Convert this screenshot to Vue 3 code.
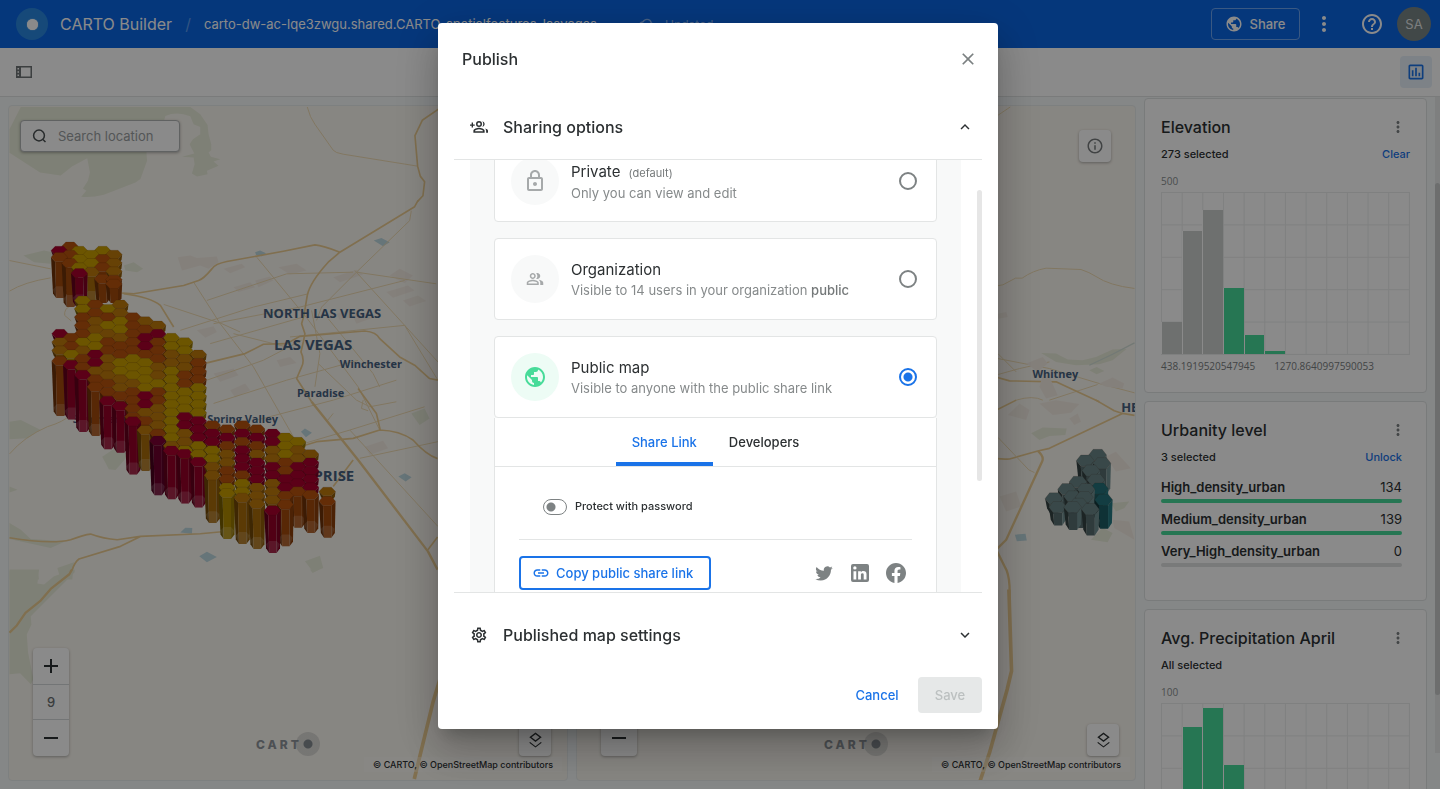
<script setup>
import { ref, computed, onMounted } from 'vue'

const icons = {
  globe: 'M12 2C6.48 2 2 6.48 2 12s4.48 10 10 10 10-4.48 10-10S17.52 2 12 2zm-1 17.93c-3.95-.49-7-3.85-7-7.93 0-.62.08-1.21.21-1.79L9 15v1c0 1.1.9 2 2 2v1.93zm6.9-2.54c-.26-.81-1-1.39-1.9-1.39h-1v-3c0-.55-.45-1-1-1H8v-2h2c.55 0 1-.45 1-1V7h2c1.1 0 2-.9 2-2v-.41c2.93 1.19 5 4.06 5 7.41 0 2.08-.8 3.97-2.1 5.39z',
  kebab: 'M12 8c1.1 0 2-.9 2-2s-.9-2-2-2-2 .9-2 2 .9 2 2 2zm0 2c-1.1 0-2 .9-2 2s.9 2 2 2 2-.9 2-2-.9-2-2-2zm0 6c-1.1 0-2 .9-2 2s.9 2 2 2 2-.9 2-2-.9-2-2-2z',
  help: 'M11 18h2v-2h-2v2zm1-16C6.48 2 2 6.48 2 12s4.48 10 10 10 10-4.48 10-10S17.52 2 12 2zm0 18c-4.41 0-8-3.59-8-8s3.59-8 8-8 8 3.59 8 8-3.59 8-8 8zm0-14c-2.21 0-4 1.79-4 4h2c0-1.1.9-2 2-2s2 .9 2 2c0 2-3 1.75-3 5h2c0-2.25 3-2.5 3-5 0-2.21-1.79-4-4-4z',
  info: 'M11 7h2v2h-2zm0 4h2v6h-2zm1-9C6.48 2 2 6.48 2 12s4.48 10 10 10 10-4.48 10-10S17.52 2 12 2zm0 18c-4.41 0-8-3.59-8-8s3.59-8 8-8 8 3.59 8 8-3.59 8-8 8z',
  chart: 'M9 17H7v-7h2v7zm4 0h-2V7h2v10zm4 0h-2v-4h2v4zm2 2H5V5h14v14zm0-16H5c-1.1 0-2 .9-2 2v14c0 1.1.9 2 2 2h14c1.1 0 2-.9 2-2V5c0-1.1-.9-2-2-2z',
  cloud: 'M19.35 10.04A7.49 7.49 0 0 0 12 4C9.11 4 6.6 5.64 5.35 8.04A5.994 5.994 0 0 0 0 14c0 3.31 2.69 6 6 6h13c2.76 0 5-2.24 5-5 0-2.64-2.05-4.78-4.65-4.96zM19 18H6c-2.21 0-4-1.79-4-4 0-2.05 1.53-3.76 3.56-3.97l1.07-.11.5-.95A5.469 5.469 0 0 1 12 6c2.62 0 4.88 1.86 5.39 4.43l.3 1.5 1.53.11A2.98 2.98 0 0 1 22 15c0 1.65-1.35 3-3 3z',
  close: 'M19 6.41 17.59 5 12 10.59 6.41 5 5 6.41 10.59 12 5 17.59 6.41 19 12 13.41 17.59 19 19 17.59 13.41 12z',
  up: 'M12 8l-6 6 1.41 1.41L12 10.83l4.59 4.58L18 14z',
  down: 'M16.59 8.59 12 13.17 7.41 8.59 6 10l6 6 6-6z',
  lock: 'M18 8h-1V6c0-2.76-2.24-5-5-5S7 3.24 7 6v2H6c-1.1 0-2 .9-2 2v10c0 1.1.9 2 2 2h12c1.1 0 2-.9 2-2V10c0-1.1-.9-2-2-2zM9 6c0-1.66 1.34-3 3-3s3 1.34 3 3v2H9V6zm9 14H6V10h12v10zm-6-3c1.1 0 2-.9 2-2s-.9-2-2-2-2 .9-2 2 .9 2 2 2z',
  people: 'M16.67 13.13C18.04 14.06 19 15.32 19 17v3h4v-3c0-2.18-3.57-3.47-6.33-3.87zM15 12c2.21 0 4-1.79 4-4s-1.79-4-4-4c-.47 0-.91.1-1.33.24a5.98 5.98 0 0 1 0 7.52c.42.14.86.24 1.33.24zM9 12c2.21 0 4-1.79 4-4s-1.79-4-4-4-4 1.79-4 4 1.79 4 4 4zm0-6c1.1 0 2 .9 2 2s-.9 2-2 2-2-.9-2-2 .9-2 2-2zM9 13c-2.67 0-8 1.34-8 4v3h16v-3c0-2.66-5.33-4-8-4zm6 5H3v-.99C3.2 16.29 6.3 15 9 15s5.8 1.29 6 2v1z',
  gear: 'M19.43 12.98c.04-.32.07-.64.07-.98 0-.34-.03-.66-.07-.98l2.11-1.65c.19-.15.24-.42.12-.64l-2-3.46a.5.5 0 0 0-.61-.22l-2.49 1c-.52-.4-1.08-.73-1.69-.98l-.38-2.65A.488.488 0 0 0 14 2h-4c-.25 0-.46.18-.49.42l-.38 2.65c-.61.25-1.17.59-1.69.98l-2.49-1a.566.566 0 0 0-.18-.03c-.17 0-.34.09-.43.25l-2 3.46c-.13.22-.07.49.12.64l2.11 1.65c-.04.32-.07.65-.07.98 0 .33.03.66.07.98l-2.11 1.65c-.19.15-.24.42-.12.64l2 3.46a.5.5 0 0 0 .61.22l2.49-1c.52.4 1.08.73 1.69.98l.38 2.65c.03.24.24.42.49.42h4c.25 0 .46-.18.49-.42l.38-2.65c.61-.25 1.17-.59 1.69-.98l2.49 1c.06.02.12.03.18.03.17 0 .34-.09.43-.25l2-3.46c.12-.22.07-.49-.12-.64l-2.11-1.65zm-1.98-1.71c.04.31.05.52.05.73 0 .21-.02.43-.05.73l-.14 1.13.89.7 1.08.84-.7 1.21-1.27-.51-1.04-.42-.9.68c-.43.32-.84.56-1.25.73l-1.06.43-.16 1.13-.2 1.35h-1.4l-.19-1.35-.16-1.13-1.06-.43c-.43-.18-.83-.41-1.23-.71l-.91-.7-1.06.43-1.27.51-.7-1.21 1.08-.84.89-.7-.14-1.13c-.03-.31-.05-.54-.05-.74s.02-.43.05-.73l.14-1.13-.89-.7-1.08-.84.7-1.21 1.27.51 1.04.42.9-.68c.43-.32.84-.56 1.25-.73l1.06-.43.16-1.13.2-1.35h1.39l.19 1.35.16 1.13 1.06.43c.43.18.83.41 1.23.71l.91.7 1.06-.43 1.27-.51.7 1.21-1.07.85-.89.7.14 1.13zM12 8c-2.21 0-4 1.79-4 4s1.79 4 4 4 4-1.79 4-4-1.79-4-4-4zm0 6c-1.1 0-2-.9-2-2s.9-2 2-2 2 .9 2 2-.9 2-2 2z',
  link: 'M3.9 12c0-1.71 1.39-3.1 3.1-3.1h4V7H7c-2.76 0-5 2.24-5 5s2.24 5 5 5h4v-1.9H7c-1.71 0-3.1-1.39-3.1-3.1zM8 13h8v-2H8v2zm9-6h-4v1.9h4c1.71 0 3.1 1.39 3.1 3.1s-1.39 3.1-3.1 3.1h-4V17h4c2.76 0 5-2.24 5-5s-2.24-5-5-5z',
  layers: 'M19.81 15.99l1.19.92-9 7-9-7 1.19-.93 7.8 6.07 7.82-6.06zM12 16l7.36-5.73L21 9l-9-7-9 7 1.63 1.27L12 16zm0-11.47L17.74 9 12 13.47 6.26 9 12 4.53z',
  twitter: 'M22.46 6c-.77.35-1.6.58-2.46.69.88-.53 1.56-1.37 1.88-2.38-.83.5-1.75.85-2.72 1.05a4.27 4.27 0 0 0-7.29 3.91A12.14 12.14 0 0 1 3.05 4.81a4.25 4.25 0 0 0 1.32 5.7c-.71 0-1.37-.2-1.95-.5v.03c0 2.08 1.48 3.82 3.44 4.21a4.22 4.22 0 0 1-1.93.07 4.28 4.28 0 0 0 4 2.98A8.521 8.521 0 0 1 1.62 19.06 12.13 12.13 0 0 0 8.12 21C16 21 20.33 14.46 20.33 8.79c0-.19 0-.37-.01-.56.84-.6 1.56-1.36 2.14-2.23z',
  linkedin: 'M19 3a2 2 0 0 1 2 2v14a2 2 0 0 1-2 2H5a2 2 0 0 1-2-2V5a2 2 0 0 1 2-2h14m-.5 15.5v-5.3a3.26 3.26 0 0 0-3.26-3.26c-.85 0-1.84.52-2.32 1.3v-1.11h-2.79v8.37h2.79v-4.93c0-.77.62-1.4 1.39-1.4a1.4 1.4 0 0 1 1.4 1.4v4.93h2.79M6.88 8.56a1.68 1.68 0 1 0 0-3.37 1.68 1.68 0 0 0 0 3.37m1.39 9.94v-8.37H5.5v8.37h2.77z',
  facebook: 'M12 2.04C6.5 2.04 2 6.53 2 12.06 2 17.06 5.66 21.21 10.44 21.96V14.96H7.9V12.06H10.44V9.85C10.44 7.34 11.93 5.96 14.22 5.96C15.31 5.96 16.45 6.15 16.45 6.15V8.62H15.19C13.95 8.62 13.56 9.39 13.56 10.18V12.06H16.34L15.89 14.96H13.56V21.96C18.34 21.21 22 17.06 22 12.06C22 6.53 17.5 2.04 12 2.04z',
}

/* ---------- extruded hexagon layers ---------- */
const palette = { y: '#c89e00', a: '#bf7a0c', o: '#b9540e', c: '#aa002e', p: '#7c0034' }

function shade(hex, k) {
  const n = parseInt(hex.slice(1), 16)
  const f = (v) => Math.max(0, Math.min(255, Math.round(v * k)))
  return `rgb(${f(n >> 16)},${f((n >> 8) & 255)},${f(n & 255)})`
}

function prism(x, y, w, h, depth, color, key) {
  const q = w / 4
  const v = h / 2
  return {
    key,
    top: `${x - w / 2},${y} ${x - q},${y - v} ${x + q},${y - v} ${x + w / 2},${y} ${x + q},${y + v} ${x - q},${y + v}`,
    left: `${x - w / 2},${y} ${x - q},${y + v} ${x - q + 3},${y + v + depth} ${x - w / 2 + 6},${y + depth}`,
    mid: `${x - q},${y + v} ${x + q},${y + v} ${x + q},${y + v + depth} ${x - q + 3},${y + v + depth}`,
    right: `${x + q},${y + v} ${x + w / 2},${y} ${x + w / 2 - 2},${y + depth} ${x + q},${y + v + depth}`,
    foot: depth > 60
      ? `${x - w / 2 + 6},${y + depth - 12} ${x - q + 3},${y + depth - 22} ${x + q},${y + depth - 22} ${x + w / 2 - 3},${y + depth - 12} ${x + q},${y + v + depth} ${x - q + 3},${y + v + depth}`
      : '',
    cTop: shade(color, 1),
    cLeft: shade(color, 0.6),
    cMid: shade(color, 0.88),
    cRight: shade(color, 0.76),
  }
}

const anchors = {
  y: [[250, 320], [330, 320], [400, 480], [400, 510], [440, 480], [440, 540], [480, 550], [520, 520], [520, 570], [560, 610], [600, 590], [600, 620], [500, 400], [540, 430], [520, 640], [520, 680], [260, 420], [300, 435], [210, 470], [860, 740], [880, 720], [720, 860], [600, 745], [640, 770], [680, 880], [240, 155], [270, 185], [310, 145], [500, 600], [370, 505], [350, 375]],
  a: [[370, 315], [430, 350], [460, 360], [590, 460], [560, 480], [320, 520], [365, 540], [640, 800], [800, 760], [790, 850], [440, 630], [740, 900], [180, 440], [350, 180], [270, 230], [920, 765], [980, 870], [270, 360], [240, 440], [460, 670], [520, 490], [280, 390], [560, 710], [800, 890], [330, 480], [680, 780], [330, 200], [340, 400], [480, 520]],
  o: [[230, 360], [320, 345], [380, 395], [410, 430], [330, 420], [380, 450], [290, 350], [590, 505], [480, 480], [550, 540], [400, 600], [360, 590], [300, 540], [640, 684], [680, 690], [710, 670], [760, 680], [700, 820], [850, 795], [620, 640], [200, 180], [300, 215], [330, 240], [330, 275], [860, 880], [930, 890], [895, 870], [710, 730], [480, 590], [385, 355], [430, 650], [760, 740], [690, 740], [215, 135], [305, 170], [470, 700], [230, 385], [345, 450], [310, 320], [270, 480], [210, 440], [210, 400], [205, 150], [290, 325], [470, 440], [420, 400], [420, 450], [320, 460]],
  c: [[180, 400], [290, 295], [450, 410], [450, 428], [293, 478], [440, 600], [555, 650], [555, 675], [590, 668], [595, 690], [595, 715], [630, 712], [665, 710], [710, 700], [750, 710], [795, 697], [720, 750], [720, 775], [765, 820], [805, 805], [855, 850], [880, 810], [890, 835], [925, 800], [935, 850], [940, 825], [172, 134]],
}
const anchorList = Object.entries(anchors).flatMap(([c, pts]) => pts.map(([x, y]) => ({ c, x, y })))

function colorAt(x, y) {
  let best = anchorList[0]
  let dist = Infinity
  for (const a of anchorList) {
    const d = (a.x - x) ** 2 + ((a.y - y) * 1.3) ** 2
    if (d < dist) { dist = d; best = a }
  }
  return palette[best.c]
}

/* [x, first row, front row, base, front colour] */
const northStrips = [
  [176, 137, 170, 285, 'o'], [208, 134, 188, 312, 'o'], [236, 150, 218, 310, 'c'],
  [272, 145, 215, 300, 'a'], [306, 140, 235, 300, 'o'], [340, 166, 250, 300, 'o'],
]
const mainStrips = [
  [178, 403, 482, 640, 'o'], [212, 400, 494, 650, 'c'], [246, 298, 524, 688, 'c'],
  [284, 302, 560, 700, 'o'], [321, 315, 602, 740, 'c'], [359, 312, 618, 750, 'c'],
  [397, 340, 664, 816, 'c'], [434, 352, 690, 805, 'a'], [472, 360, 722, 878, 'p'],
  [513, 395, 752, 890, 'c'], [553, 424, 762, 903, 'c'], [594, 462, 786, 915, 'c'],
  [636, 680, 826, 962, 'a'], [680, 688, 880, 1010, 'y'], [726, 680, 894, 1025, 'a'],
  [770, 690, 912, 1040, 'a'], [817, 704, 932, 1052, 'c'], [856, 712, 914, 1032, 'o'],
  [893, 724, 875, 976, 'o'], [932, 764, 885, 992, 'o'], [982, 872, 904, 1006, 'o'],
]

function build(strips, tag) {
  const out = []
  const step = 25
  strips.forEach(([x, y0, y1, base, c], i) => {
    const phase = i % 2 ? 12 : 0
    const first = Math.ceil((y0 - 6 - phase) / step) * step + phase
    for (let y = first; y < y1 - 10; y += step) {
      out.push({ y, p: prism(x, y, 50, 26, 16, colorAt(x, y), `${tag}${i}-${y}`) })
    }
    out.push({ y: y1, p: prism(x, y1, 50, 28, base - y1 - 6, palette[c], `${tag}${i}-front`) })
  })
  return out.sort((a, b) => a.y - b.y).map((o) => o.p)
}
const hexes = [...build(northStrips, 'n'), ...build(mainStrips, 'm')]

const slate = '#6a8688'
const teal = '#23727a'
const tealHexes = [
  [325, 165, 90, slate], [288, 182, 70, slate], [338, 190, 90, slate], [305, 212, 70, slate],
  [320, 240, 60, slate], [266, 246, 60, slate], [330, 266, 90, teal], [290, 268, 60, slate],
  [232, 268, 70, slate], [250, 290, 60, slate], [343, 300, 84, teal], [285, 292, 70, slate],
  [194, 296, 44, slate], [268, 312, 70, slate], [205, 322, 52, slate], [250, 322, 66, slate], [303, 328, 76, slate],
].map(([x, y, d, c], i) => {
  const p = prism(x, y, 54, 34, d - 14, c, `t${i}`)
  p.foot = ''
  p.cLeft = shade(c, 0.5)
  p.cMid = shade(c, 0.82)
  p.cRight = shade(c, 1.08)
  return p
})

/* ---------- widgets ---------- */
const elevation = [
  { h: 20, sel: false }, { h: 76, sel: false }, { h: 89, sel: false },
  { h: 41, sel: true }, { h: 12, sel: true }, { h: 2, sel: true },
]
const rain = [{ h: 0, sel: true }, { h: 85, sel: true }, { h: 97, sel: true }, { h: 62, sel: true }]
const urbanity = [
  { name: 'High_density_urban', count: 134, pct: 100 },
  { name: 'Medium_density_urban', count: 139, pct: 100 },
  { name: 'Very_High_density_urban', count: 0, pct: 0 },
]

/* ---------- dialog ---------- */
const access = ref('public')
const tab = ref('link')
const locked = ref(false)
const scroller = ref(null)
const view = ref({ top: 0, height: 1, total: 1 })
function measure() {
  const el = scroller.value
  view.value = { top: el.scrollTop, height: el.clientHeight, total: el.scrollHeight }
}
const thumb = computed(() => ({
  top: (view.value.top / view.value.total) * 100 + '%',
  height: (view.value.height / view.value.total) * 100 + '%',
}))
onMounted(() => {
  scroller.value.scrollTop = 44
  measure()
})
</script>

<template>
  <div class="app">
    <header class="appbar">
      <span class="logo"><i></i></span>
      <span class="brand">CARTO Builder</span>
      <span class="slash">/</span>
      <span class="project">carto-dw-ac-lqe3zwgu.shared.CARTO_spatialfeatures_lasvegas</span>
      <span class="status">
        <svg viewBox="0 0 24 24" width="16" height="16"><path :d="icons.cloud" /></svg>
        Updated
      </span>
      <div class="bar-actions">
        <button class="share" type="button">
          <svg viewBox="0 0 24 24" width="18" height="18"><path :d="icons.globe" /></svg>Share
        </button>
        <button class="bar-icon" type="button" aria-label="More options">
          <svg viewBox="0 0 24 24" width="24" height="24"><path :d="icons.kebab" /></svg>
        </button>
        <button class="bar-icon help" type="button" aria-label="Help">
          <svg viewBox="0 0 24 24" width="24" height="24"><path :d="icons.help" /></svg>
        </button>
        <span class="avatar">SA</span>
      </div>
    </header>

    <div class="toolbar">
      <button class="plain" type="button" aria-label="Toggle left panel">
        <svg viewBox="0 0 16 12" width="16" height="12" class="panel-icon">
          <path fill-rule="evenodd" d="M0 0h16v12H0zM5 1.500v9h9.500v-9zM1.500 2v1.500h1.500V2zM1.500 5.200v1.500h1.500V5.200zM1.500 8.500V10h1.500V8.500z" />
        </svg>
      </button>
      <button class="chart-toggle" type="button" aria-label="Widgets">
        <svg viewBox="0 0 24 24" width="20" height="20"><path :d="icons.chart" /></svg>
      </button>
    </div>

    <div class="workspace">
      <section class="map">
        <svg class="canvas" viewBox="8 105 560 676" preserveAspectRatio="xMidYMid slice">
          <g transform="scale(.333333)">
            <path class="park" d="M60 318H570L600 340L622 372L625 400L633 430V448L625 455L632 468L660 475L640 482L655 495L620 510L622 520L590 527L575 518L583 490L580 470L545 468L582 458L568 430L578 415L600 400V378L580 370L570 346Q530 330 495 345L480 400L438 455L440 480L420 535L405 545L310 582Q270 592 242 588L257 570L247 563L262 540L268 515L260 472L215 496L180 524L118 515L26 456V385Z" />
            <path class="road thin" d="M922 318Q930 350 945 370L1000 448Q1006 456 1030 460L1254 496" />
            <path class="road" d="M1320 322L1268 358L1246 404L1254 496L1262 526L1275 543L1270 585L1254 602" />
          </g>
          <g transform="translate(0 200) scale(.333333)">
            <path class="block" d="M532 170L570 165L590 172L650 168L655 185L625 205L600 195L545 210ZM670 205L725 190L735 200L690 218ZM765 240L810 228L820 240L775 260ZM1170 225L1200 205L1240 225L1215 248ZM1000 230L1070 208L1090 222L1020 245ZM835 200L890 190L920 210L870 222ZM590 390L640 378L650 395L615 412ZM640 520L700 505L715 525L660 545ZM690 570L735 550L750 570L705 592ZM1060 350L1110 335L1125 350L1070 370ZM1160 275L1225 255L1245 270L1180 292ZM1210 300L1255 285L1280 302L1230 318ZM830 480L870 470L890 488L840 500ZM1095 740L1150 722L1165 745L1110 765ZM1010 340L1060 325L1075 345L1020 360ZM700 260L750 245L765 260L715 275Z" />
            <path class="park" d="M68 165L130 150L155 155L150 190L100 185ZM370 195L400 185L428 205L410 215L375 210ZM26 665L60 660L120 690L80 715L26 718ZM305 770L350 740L385 765L345 810L325 808ZM26 970L60 990L90 1018L195 1025L150 1045L26 1018ZM915 1085L960 1068L970 1105L940 1118ZM1235 640L1275 625L1290 655L1260 675ZM26 1115L110 1112L115 1140H26ZM26 860L50 870L26 878ZM170 1105L220 1088L215 1140H180Z" />
            <path class="water" d="M765 155L780 150L798 158L785 167L768 163ZM1122 120L1145 112L1170 125L1150 137ZM903 695L915 685L936 698L918 712ZM1196 830L1215 820L1236 832L1218 845ZM540 998L555 984L576 985L575 1002ZM597 1070L620 1056L650 1072L620 1088Z" />
            <path class="road thin" d="M1235 30L1230 60L1070 215L965 320L950 360M770 170L920 352L1075 560L1140 690M1065 210L1315 485M1080 775L1315 725M1070 215L1310 250M580 245L660 370L760 500L900 745M620 300L860 220L1060 215M640 370L900 320L1215 240M540 390L760 320L925 280M630 430L910 350M620 540L790 480L905 420M640 610L860 540L1075 480M770 660L1000 600L1190 540M880 740L1050 690L1275 620M935 330L960 460L945 560M1215 375L1315 540M700 400L860 440M720 395L665 370L490 312M955 490L1070 600L1110 620L1190 605M1090 600L1085 625L1105 632M1000 640L980 665M870 410L1215 375M1050 690L1315 980M985 355L1120 520L1140 560" />
            <path class="road" d="M1255 0L1245 18L1020 155L985 185Q930 245 922 285L912 345L905 370L915 400L910 425L903 455Q915 480 905 500L890 535L935 605M1020 155Q970 135 945 133L850 152L680 183Q645 190 635 205Q610 235 595 240L550 255L400 280L365 278" />
            <path class="road wide" d="M935 605L1075 780L1285 1055L1314 1110" />
            <path class="road" d="M370 280Q450 290 480 315L520 380M620 488L735 460L790 432L860 430L900 408L1095 392Q1130 395 1140 415L1200 470L1245 495L1290 535L1315 540M908 738L950 725L1060 715L1140 690Q1200 692 1240 720Q1280 765 1314 776M1075 565L1130 640L1142 692M1060 780L1000 860" />
            <path class="road thin" d="M26 180L150 205M26 272Q70 245 150 232M26 762Q70 710 140 680Q190 665 208 645M208 318Q190 325 192 345L212 362" />
            <path class="road" d="M26 1014Q150 1035 210 1020Q250 1005 270 1003Q310 1018 350 1020L420 1010L600 1002L665 996M420 1010L360 1040L235 1078Q222 1088 215 1110L180 1140M1314 1012L1285 1050" />
          </g>
          <g transform="translate(0 570) scale(.333333)">
            <path class="park" d="M26 0H115L110 42L130 45L160 20L195 8L222 0V8L90 140L92 165L78 195L82 250L98 330L90 345L58 312L26 315ZM930 0L958 0L938 10Z" />
            <path class="road wide" d="M214 0L206 14L150 58L118 95L74 130L48 168L26 190" />
            <path class="road heavy" d="M1330 300L1300 400L1244 630" />
          </g>
          <g class="city">
            <text x="263" y="318" font-size="13">NORTH LAS VEGAS</text>
            <text x="274" y="350" font-size="15">LAS VEGAS</text>
            <text x="340" y="368" font-size="11">Winchester</text>
            <text x="297" y="397" font-size="11">Paradise</text>
            <text x="207" y="423" font-size="11">Spring Valley</text>
            <text x="72" y="423" font-size="11">Summerlin</text>
            <text x="266" y="481" font-size="15">ENTERPRISE</text>
          </g>
          <g transform="translate(0 200) scale(.333333)">
            <g v-for="p in hexes" :key="p.key">
              <polygon :points="p.left" :fill="p.cLeft" />
              <polygon :points="p.mid" :fill="p.cMid" />
              <polygon :points="p.right" :fill="p.cRight" />
              <polygon v-if="p.foot" :points="p.foot" class="foot" />
              <polygon :points="p.top" :fill="p.cTop" class="lid" />
            </g>
          </g>
        </svg>
        <label class="search">
          <svg viewBox="0 0 16 16" width="16" height="16"><circle cx="7" cy="7.500" r="5.400" /><path d="M11 11.500 13.500 14" /></svg>
          <input type="text" placeholder="Search location" aria-label="Search location">
        </label>
        <div class="zoom">
          <button type="button" aria-label="Zoom in"><i class="h"></i><i class="v"></i></button>
          <span>9</span>
          <button type="button" aria-label="Zoom out"><i class="h"></i></button>
        </div>
        <div class="mark"><b>CART</b><i></i></div>
        <button class="layers" type="button" aria-label="Layers">
          <svg viewBox="0 0 24 26" width="17" height="18"><path :d="icons.layers" /></svg>
        </button>
        <div class="credit">© CARTO, © OpenStreetMap contributors</div>
      </section>

      <section class="map">
        <svg class="canvas" viewBox="576 105 560 676" preserveAspectRatio="xMidYMid slice">
          <g transform="translate(990) scale(.333333)">
            <path class="road thin" d="M0 360L25 343L62 318" />
          </g>
          <g transform="translate(990 190) scale(.333333)">
            <path class="road thin" d="M0 290L40 283L78 263H98Q130 240 170 233L275 237Q300 245 320 258Q360 285 436 294M0 500L180 535L330 580L436 608M0 560L90 535L180 515M25 490L80 545M180 630L325 583M80 630Q130 615 160 630" />
            <path class="road" d="M0 555L60 572L200 575L250 598L330 635" />
            <path class="park" d="M155 488L200 490L235 508L280 510L320 500L370 478L412 476L370 510L330 522L260 525L200 515ZM300 540L322 530L345 542L322 552Z" />
            <path class="water-line" d="M436 458L370 492L300 525" />
            <path class="block" d="M25 370L50 365L55 380L25 385ZM110 520L160 500L175 520L150 540L180 560L205 615L170 625L150 590L160 555ZM330 580L370 562L405 580L400 595L350 590Z" />
          </g>
          <g transform="translate(990 400) scale(.333333)">
            <path class="block" d="M55 45L90 10L120 30L110 60ZM150 10L200 0L270 12L245 38L190 45ZM240 55L265 40L275 65L255 75ZM350 170L380 155L425 205L380 215ZM370 360L420 365L436 420L375 385ZM30 290L80 275L95 320L50 335Z" />
            <path class="park" d="M125 100L160 82L232 85L228 105L180 108L150 120ZM365 310L420 305L405 325L380 335ZM305 420L340 385L370 400L355 428Z" />
            <path class="water" d="M76 405L108 402L112 422L82 425Z" />
            <path class="road" d="M0 170Q30 180 60 177L145 153L180 145L400 40L436 46M320 0L375 32L400 40M0 40L80 0" />
            <path class="road thin" d="M25 112L118 210L135 218" />
            <path class="road wide" d="M145 153Q165 170 158 185L50 420L20 450M20 450L45 500Q58 520 60 560V602" />
          </g>
          <g transform="translate(990 590) scale(.333333)">
            <path class="road heavy" d="M58 0L66 245L53 300L0 490L-30 580" />
          </g>
          <g class="city">
            <text x="1033" y="378" font-size="11">Whitney</text>
            <text x="1122" y="412" font-size="13">HENDERSON</text>
          </g>
          <g transform="translate(990 400) scale(.333333)">
            <g v-for="p in tealHexes" :key="p.key">
              <polygon :points="p.left" :fill="p.cLeft" />
              <polygon :points="p.mid" :fill="p.cMid" />
              <polygon :points="p.right" :fill="p.cRight" />
              <polygon :points="p.top" :fill="p.cTop" class="lid" />
            </g>
          </g>
        </svg>
        <button class="info" type="button" aria-label="Map information">
          <svg viewBox="0 0 24 24" width="18" height="18"><path :d="icons.info" /></svg>
        </button>
        <div class="zoom">
          <button type="button" aria-label="Zoom in"><i class="h"></i><i class="v"></i></button>
          <span>9</span>
          <button type="button" aria-label="Zoom out"><i class="h"></i></button>
        </div>
        <div class="mark"><b>CART</b><i></i></div>
        <button class="layers" type="button" aria-label="Layers">
          <svg viewBox="0 0 24 26" width="17" height="18"><path :d="icons.layers" /></svg>
        </button>
        <div class="credit">© CARTO, © OpenStreetMap contributors</div>
      </section>

      <aside class="widgets">
        <article class="widget">
          <header><h2>Elevation</h2><button type="button" aria-label="Elevation options"><svg viewBox="0 0 24 24" width="18" height="18"><path :d="icons.kebab" /></svg></button></header>
          <div class="sub"><span>273 selected</span><a href="#">Clear</a></div>
          <div class="peak">500</div>
          <div class="plot"><i v-for="(b, i) in elevation" :key="i" :class="{ sel: b.sel }" :style="{ height: b.h + '%' }"></i></div>
          <div class="ticks"><span>438.1919520547945</span><span>1270.8640997590053</span></div>
        </article>

        <article class="widget urban">
          <header><h2>Urbanity level</h2><button type="button" aria-label="Urbanity level options"><svg viewBox="0 0 24 24" width="18" height="18"><path :d="icons.kebab" /></svg></button></header>
          <div class="sub"><span>3 selected</span><a href="#">Unlock</a></div>
          <ul>
            <li v-for="u in urbanity" :key="u.name">
              <div><b>{{ u.name }}</b><span>{{ u.count }}</span></div>
              <p><i :style="{ width: u.pct + '%' }"></i></p>
            </li>
          </ul>
        </article>

        <article class="widget">
          <header><h2>Avg. Precipitation April</h2><button type="button" aria-label="Precipitation options"><svg viewBox="0 0 24 24" width="18" height="18"><path :d="icons.kebab" /></svg></button></header>
          <div class="sub"><span>All selected</span></div>
          <div class="peak">100</div>
          <div class="plot"><i v-for="(b, i) in rain" :key="i" :class="{ sel: b.sel }" :style="{ height: b.h + '%' }"></i></div>
        </article>
      </aside>
      <div class="page-scroll"><i></i></div>
    </div>
  </div>

  <div class="overlay">
    <div class="dialog" role="dialog" aria-modal="true" aria-labelledby="dialog-title">
      <header class="dialog-head">
        <h1 id="dialog-title">Publish</h1>
        <button class="plain" type="button" aria-label="Close">
          <svg viewBox="0 0 24 24" width="20" height="20"><path :d="icons.close" /></svg>
        </button>
      </header>

      <div class="dialog-body">
        <button class="fold" type="button" aria-expanded="true">
          <svg viewBox="0 0 24 24" width="18" height="18">
            <path d="M4 8.500V6H2.200v2.500H0v1.700h2.200v2.500H4v-2.500h2.300V8.500zM12 12a4 4 0 1 0 0-8 4 4 0 0 0 0 8zm0-6a2 2 0 1 1 0 4 2 2 0 0 1 0-4zM12 13c-2.500 0-7.500 1.300-7.500 4v2.500h15V17c0-2.700-5-4-7.500-4zm5.300 4.500H6.700V17c.5-.9 3.100-2 5.300-2s4.800 1.100 5.300 2zM16.500 4.200c1.800.5 3 2 3 3.800s-1.200 3.300-3 3.800c.7-1 1.200-2.300 1.200-3.800s-.5-2.800-1.200-3.800zM20 14c2.200.6 4 1.500 4 3v2.500h-2.500V17c0-1.200-.6-2.200-1.500-3z" />
          </svg>
          <span>Sharing options</span>
          <svg viewBox="0 0 24 24" width="18" height="18"><path :d="icons.up" /></svg>
        </button>

        <div class="scroll-wrap">
          <div ref="scroller" class="scroller" @scroll="measure">
            <div class="panel">
              <label class="option">
                <span class="disc"><svg viewBox="0 0 24 24" width="24" height="24"><path :d="icons.lock" /></svg></span>
                <span class="copy"><strong>Private <small>(default)</small></strong><em>Only you can view and edit</em></span>
                <input v-model="access" type="radio" name="access" value="private">
              </label>
              <label class="option">
                <span class="disc"><svg viewBox="0 0 24 24" width="18" height="18"><path :d="icons.people" /></svg></span>
                <span class="copy"><strong>Organization</strong><em>Visible to 14 users in your organization <b>public</b></em></span>
                <input v-model="access" type="radio" name="access" value="organization">
              </label>
              <div class="group">
                <label class="option">
                  <span class="disc green"><svg viewBox="0 0 24 24" width="24" height="24"><path :d="icons.globe" /></svg></span>
                  <span class="copy"><strong>Public map</strong><em>Visible to anyone with the public share link</em></span>
                  <input v-model="access" type="radio" name="access" value="public">
                </label>
                <div class="details">
                  <div class="tabs" role="tablist">
                    <button type="button" role="tab" :class="{ on: tab === 'link' }" @click="tab = 'link'">Share Link</button>
                    <button type="button" role="tab" :class="{ on: tab === 'dev' }" @click="tab = 'dev'">Developers</button>
                  </div>
                  <div class="share-box">
                    <label class="switch"><input v-model="locked" type="checkbox"><span>Protect with password</span></label>
                    <div class="share-row">
                      <button class="copy-link" type="button"><svg viewBox="0 0 24 24" width="18" height="18"><path :d="icons.link" /></svg>Copy public share link</button>
                      <div class="social">
                        <a href="#" aria-label="Twitter"><svg viewBox="0 0 24 24" width="20" height="20"><path :d="icons.twitter" /></svg></a>
                        <a href="#" aria-label="LinkedIn"><svg viewBox="0 0 24 24" width="24" height="24"><path :d="icons.linkedin" /></svg></a>
                        <a href="#" aria-label="Facebook"><svg viewBox="0 0 24 24" width="24" height="24"><path :d="icons.facebook" /></svg></a>
                      </div>
                    </div>
                  </div>
                </div>
              </div>
            </div>
          </div>
          <div class="thumb" :style="thumb"></div>
        </div>

        <button class="fold settings" type="button" aria-expanded="false">
          <svg viewBox="0 0 24 24" width="18" height="18"><path :d="icons.gear" /></svg>
          <span>Published map settings</span>
          <svg viewBox="0 0 24 24" width="18" height="18"><path :d="icons.down" /></svg>
        </button>
      </div>

      <footer class="dialog-foot">
        <button class="cancel" type="button">Cancel</button>
        <button class="save" type="button" disabled>Save</button>
      </footer>
    </div>
  </div>
</template>

<style>
html, body, #app { height: 100%; }
body { margin: 0; overflow: hidden; }
</style>

<style scoped>
* { box-sizing: border-box; }
button, input { font: inherit; color: inherit; }
button { border: 0; background: none; padding: 0; cursor: pointer; }
svg { display: block; flex: none; fill: currentColor; }
a { text-decoration: none; }
h1, h2, p, ul { margin: 0; padding: 0; }
ul { list-style: none; }

.app, .overlay { font-family: Inter, "Liberation Sans", sans-serif; color: #2c3032; }
.app { height: 100vh; display: flex; flex-direction: column; background: #f5f9fa; font-size: 13px; }

.appbar { flex: none; height: 48px; padding: 0 9px 0 16px; display: flex; align-items: center; background: #0b66e4; color: #fff; }
.logo { width: 32px; height: 32px; border-radius: 50%; background: #2a88e0; display: grid; place-items: center; }
.logo i { width: 11px; height: 11px; border-radius: 50%; background: #fff; box-shadow: 0 0 1px #fff; }
.brand { margin-left: 12px; font-size: 16px; }
.slash { margin: 0 13px; font-size: 16px; color: #5c9cf0; }
.project { font-size: 13px; }
.status { margin-left: 42px; display: flex; align-items: center; gap: 10px; font-size: 12px; color: #85b3f2; }
.bar-actions { margin-left: auto; display: flex; align-items: center; }
.share { width: 89px; height: 32px; border: 1px solid #6ca5f3; border-radius: 4px; display: flex; align-items: center; justify-content: center; gap: 6px; font-size: 13px; font-weight: 500; }
.bar-icon { margin-left: 12px; }
.help { margin-left: 24px; }
.avatar { width: 34px; height: 34px; margin-left: 13px; border-radius: 50%; background: #788586; display: grid; place-items: center; font-size: 13px; color: #e5e9ea; }

.toolbar { flex: none; height: 49px; padding: 0 8px 0 16px; display: flex; align-items: center; justify-content: space-between; background: #fff; border-bottom: 1px solid #e1e4e4; }
.plain { color: #7b8081; }
.panel-icon { color: #6f7577; }
.chart-toggle { width: 32px; height: 32px; border-radius: 4px; display: grid; place-items: center; background: #e8f1fa; color: #1a73e8; }

.workspace { flex: 1; min-height: 0; display: flex; }
.map { position: relative; flex: 1; margin: 8px 0 8px 8px; border: 1px solid #e8ecec; border-radius: 4px; overflow: hidden; background: #faf7f0; }
.canvas { position: absolute; inset: 0; width: 100%; height: 100%; }
.park { fill: #e9edda; }
.block { fill: #f4ede4; }
.water { fill: #bdd8df; }
.water-line { fill: none; stroke: #d3dfd8; stroke-width: 4; }
.road { fill: none; stroke: #eccd92; stroke-width: 5; stroke-linejoin: round; }
.road.thin { stroke: #efdcb4; stroke-width: 3; }
.road.wide { stroke-width: 7; }
.road.heavy { stroke-width: 11; }
.city { font-family: "Open Sans", sans-serif; font-weight: 700; fill: #456080; }
.lid { stroke: rgba(60, 20, 0, .2); stroke-width: 2; }
.foot { fill: rgba(255, 255, 255, .16); }

.search { position: absolute; left: 11px; top: 14px; width: 160px; height: 32px; padding: 0 11px; border: 1px solid #b2b5b6; border-radius: 4px; display: flex; align-items: center; gap: 10px; background: #fff; box-shadow: 0 1px 3px rgba(0, 0, 0, .3); }
.search svg { fill: none; stroke: #4a5052; stroke-width: 1.500; }
.search input { width: 100%; min-width: 0; border: 0; padding: 0; outline: 0; background: none; font-size: 13px; }
.search input::placeholder { color: #9ba0a2; opacity: 1; }
.zoom { position: absolute; left: 24px; bottom: 24px; width: 36px; border-radius: 4px; background: #fff; box-shadow: 0 1px 3px rgba(0, 0, 0, .3); }
.zoom button, .zoom span { width: 36px; height: 36px; display: grid; place-items: center; }
.zoom span { border: solid #d5d9da; border-width: 1px 0; font-weight: 500; color: #6b7072; }
.zoom i { grid-area: 1 / 1; background: #2c3032; }
.zoom .h { width: 14px; height: 2px; }
.zoom .v { width: 2px; height: 14px; }
.mark { position: absolute; left: 50%; bottom: 24px; width: 64px; height: 24px; margin-left: -32px; display: flex; align-items: center; color: #8f959b; }
.mark b { font-size: 12px; letter-spacing: 3px; font-weight: 800; }
.mark i { position: absolute; right: 0; top: 0; width: 24px; height: 24px; border-radius: 50%; background: radial-gradient(circle, #848b91 4px, rgba(110, 115, 120, .22) 5px); }
.layers, .info { position: absolute; width: 32px; height: 32px; border-radius: 4px; background: #fff; display: grid; place-items: center; box-shadow: 0 1px 3px rgba(0, 0, 0, .3); }
.layers { right: 16px; bottom: 24px; }
.info { right: 24px; top: 24px; color: #787d7f; }
.credit { position: absolute; right: 5px; bottom: 8px; height: 15px; padding: 0 9px; background: rgba(255, 255, 255, .3); font-size: 9px; line-height: 15px; font-weight: 500; white-space: nowrap; }

.widgets { flex: none; width: 299px; padding: 1px 8px 0; overflow: hidden; }
.widget { min-height: 200px; margin-bottom: 8px; padding: 16px; border: 1px solid #dfe3e3; border-radius: 4px; background: #fff; }
.widget:first-child { height: 295px; }
.widget header { height: 24px; display: flex; align-items: center; justify-content: space-between; }
.widget h2 { font-size: 16px; font-weight: 500; }
.widget header button { width: 18px; margin-right: 3px; color: #7d8284; }
.sub { margin-top: 6px; height: 18px; display: flex; align-items: center; justify-content: space-between; font-size: 11px; font-weight: 500; }
.sub a { color: #1a73e8; }
.peak { margin-top: 10px; height: 16px; line-height: 16px; font-family: "Open Sans", sans-serif; font-size: 10px; color: #8a8f91; }
.plot { margin-top: 3px; height: 163px; display: flex; align-items: flex-end; border: solid #ebeded; border-width: 0 1px 1px 0; background: linear-gradient(90deg, #ebeded 1px, transparent 1px) 0 0 / 8.333% 100%, linear-gradient(#ebeded 1px, transparent 1px) 0 0 / 100% 20%; }
.plot i { width: 8.333%; border-left: 1px solid #fff; background: #cbcfce; background-clip: padding-box; }
.plot i.sel { background-color: #47db99; }
.ticks { margin-top: 3px; display: flex; gap: 19px; font-family: "Open Sans", sans-serif; font-size: 10px; line-height: 16px; color: #7b8082; }
.urban .sub, .urban ul { margin-right: 8px; }
.urban ul { margin-top: 11px; }
.urban li { height: 32px; }
.urban li div { height: 22px; line-height: 20px; display: flex; justify-content: space-between; font-size: 13px; }
.urban li b { font-weight: 600; }
.urban li p { height: 4px; border-radius: 2px; background: #dfe2e2; overflow: hidden; }
.urban li p i { display: block; height: 4px; background: #47db99; }
.page-scroll { flex: none; width: 5px; height: 656px; align-self: flex-start; background: #e9ebeb; }
.page-scroll i { display: block; height: 512px; margin-top: 86px; border-radius: 3px; background: #c9cccc; }

.overlay { position: fixed; inset: 0; padding: 23px 4px 60px 0; display: flex; justify-content: center; background: rgba(0, 0, 0, .46); }
.dialog { width: 560px; max-width: 100%; display: flex; flex-direction: column; border-radius: 4px; background: #fff; box-shadow: 0 11px 15px -7px rgba(0, 0, 0, .2), 0 24px 38px 3px rgba(0, 0, 0, .14), 0 9px 46px 8px rgba(0, 0, 0, .12); }
.dialog-head { flex: none; height: 72px; padding: 0 20px 0 24px; display: flex; align-items: center; justify-content: space-between; }
h1 { font-size: 16px; line-height: 24px; font-weight: 500; }
.dialog-body { flex: 1; min-height: 0; padding: 0 16px; display: flex; flex-direction: column; }
.fold { flex: none; width: 100%; height: 65px; padding: 0 8px 0 16px; display: flex; align-items: center; gap: 15px; border-bottom: 1px solid #e3e5e5; font-size: 16px; font-weight: 500; text-align: left; }
.fold span { flex: 1; }
.fold.settings { height: 85px; border-bottom: 0; border-top: 1px solid #e3e5e5; }
.scroll-wrap { position: relative; flex: 1; min-height: 0; }
.scroller { height: 100%; overflow-y: auto; scrollbar-width: none; }
.thumb { position: absolute; right: 0; width: 5px; border-radius: 3px; background: #e6e6e6; }
.panel { min-height: 641px; margin: 0 21px 0 16px; padding: 24px; display: flex; flex-direction: column; gap: 16px; background: #f8f9f9; }
.option { height: 82px; padding: 0 19px 0 16px; display: flex; align-items: center; border: 1px solid #e3e5e5; border-radius: 4px; background: #fff; }
.disc { flex: none; width: 48px; height: 48px; border-radius: 50%; display: grid; place-items: center; background: #f8f9f9; color: #a6a9aa; }
.disc.green { background: #edfcf5; color: #47db99; }
.copy { flex: 1; margin-left: 12px; padding-top: 2px; display: flex; flex-direction: column; }
.copy strong { font-size: 15px; line-height: 20px; font-weight: 400; }
.copy small { margin-left: 4px; font-size: 11px; color: #747879; }
.copy em { font-size: 13px; line-height: 20px; font-style: normal; color: #868a8b; }
.copy b { font-weight: 500; color: #747879; }
.option input { appearance: none; flex: none; width: 18px; height: 18px; margin: 0; border: 2px solid #7d8283; border-radius: 50%; background: #fff; }
.option input:checked { border-color: #1a73e8; background: radial-gradient(circle, #1a73e8 4px, #fff 5px); }
.details { border: 1px solid #e3e5e5; border-top: 0; background: #fff; height: 315px; }
.tabs { height: 49px; display: flex; justify-content: center; border-bottom: 1px solid #e3e5e5; }
.tabs button { padding: 0 16px; border: solid transparent; border-width: 4px 0; font-size: 13px; font-weight: 500; }
.tabs .on { color: #1a73e8; border-bottom-color: #1a73e8; }
.share-box { padding: 0 24px; }
.switch { height: 73px; padding: 6px 0 0 24px; display: flex; align-items: center; gap: 8px; border-bottom: 1px solid #e3e5e5; font-size: 11px; font-weight: 500; }
.switch input { appearance: none; width: 24px; height: 16px; margin: 2px 0 0; border: 1px solid #7d8283; border-radius: 8px; background: radial-gradient(circle at 7px 7px, #7d8283 4px, transparent 5px); }
.switch input:checked { background: radial-gradient(circle at 15px 7px, #1a73e8 4px, transparent 5px); }
.share-row { padding-top: 16px; display: flex; align-items: center; justify-content: space-between; }
.copy-link { height: 34px; padding: 0 16px 0 11px; display: flex; align-items: center; gap: 6px; border: 2px solid #1a73e8; border-radius: 4px; font-size: 13px; font-weight: 500; color: #1a73e8; }
.social { display: flex; align-items: center; gap: 12px; padding-right: 4px; color: #7d8283; }
.social a { width: 24px; height: 24px; color: inherit; display: grid; place-items: center; }
.dialog-foot { flex: none; height: 52px; padding: 0 16px 16px; display: flex; justify-content: flex-end; font-size: 13px; font-weight: 500; }
.cancel { width: 82px; height: 36px; color: #1a73e8; }
.save { width: 64px; height: 36px; border-radius: 4px; background: #e6e8e8; color: #bcc0c0; }
</style>
